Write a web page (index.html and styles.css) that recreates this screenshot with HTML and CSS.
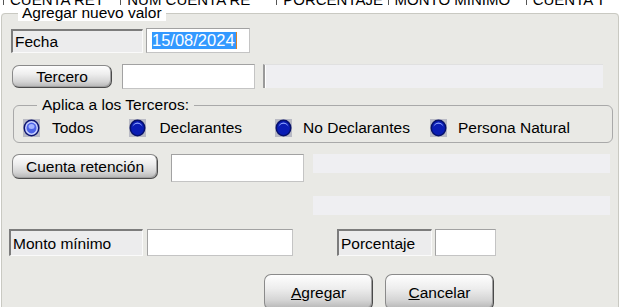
FILE: index.html
```html
<!DOCTYPE html>
<html lang="es">
<head>
    <meta charset="UTF-8">
    <title>Agregar nuevo valor</title>
    <link rel="stylesheet" href="styles.css">
</head>
<body>
    <div class="grid-head">
        <span class="col c1"><span>CUENTA RET</span></span>
        <span class="col c2"><span>NUM CUENTA RE</span></span>
        <span class="col c3"><span>PORCENTAJE</span></span>
        <span class="col c4"><span>MONTO MINIMO</span></span>
        <span class="col c5"><span>CUENTA T</span></span>
    </div>

    <fieldset class="group">
        <legend>Agregar nuevo valor</legend>

        <div class="row row-fecha">
            <span class="caption cap-fecha">Fecha</span>
            <div class="field date"><span class="sel">15/08/2024</span><span class="caret"></span></div>
        </div>

        <div class="row row-tercero">
            <button class="btn btn-tercero">Tercero</button>
            <div class="field in-tercero"></div>
            <div class="readonly ro-tercero"></div>
        </div>

        <fieldset class="aplica">
            <legend>Aplica a los Terceros:</legend>
            <div class="radios">
                <label class="radio r-todos">
                    <svg width="17" height="18" viewBox="0 0 17 18">
                        <rect x="0" y="0" width="17" height="18" fill="#b9bac4"/>
                        <ellipse cx="8.5" cy="9" rx="8" ry="8.5" fill="#0c1470"/>
                        <ellipse cx="8.5" cy="9" rx="6.5" ry="7" fill="#c8d0ff"/>
                        <ellipse cx="8.5" cy="9" rx="5" ry="5.4" fill="#4c62e6"/>
                        <ellipse cx="8.5" cy="7.6" rx="3" ry="2.5" fill="#a4b4ff"/>
                    </svg>
                    Todos
                </label>
                <label class="radio r-decl">
                    <svg width="17" height="18" viewBox="0 0 17 18">
                        <rect x="0" y="0" width="17" height="18" fill="#b9bac4"/>
                        <ellipse cx="8.5" cy="9" rx="8" ry="8.5" fill="#06106a"/>
                        <ellipse cx="8.5" cy="9" rx="6.5" ry="7" fill="#0a1cb4"/>
                        <path d="M3.5 8.6 A5 5.2 0 0 1 13.5 8.6 A5 3.8 0 0 0 3.5 8.6 Z" fill="#8ea4ff"/>
                    </svg>
                    Declarantes
                </label>
                <label class="radio r-nodecl">
                    <svg width="17" height="18" viewBox="0 0 17 18">
                        <rect x="0" y="0" width="17" height="18" fill="#b9bac4"/>
                        <ellipse cx="8.5" cy="9" rx="8" ry="8.5" fill="#06106a"/>
                        <ellipse cx="8.5" cy="9" rx="6.5" ry="7" fill="#0a1cb4"/>
                        <path d="M3.5 8.6 A5 5.2 0 0 1 13.5 8.6 A5 3.8 0 0 0 3.5 8.6 Z" fill="#8ea4ff"/>
                    </svg>
                    No Declarantes
                </label>
                <label class="radio r-persona">
                    <svg width="17" height="18" viewBox="0 0 17 18">
                        <rect x="0" y="0" width="17" height="18" fill="#b9bac4"/>
                        <ellipse cx="8.5" cy="9" rx="8" ry="8.5" fill="#06106a"/>
                        <ellipse cx="8.5" cy="9" rx="6.5" ry="7" fill="#0a1cb4"/>
                        <path d="M3.5 8.6 A5 5.2 0 0 1 13.5 8.6 A5 3.8 0 0 0 3.5 8.6 Z" fill="#8ea4ff"/>
                    </svg>
                    Persona Natural
                </label>
            </div>
        </fieldset>

        <div class="row row-cuenta">
            <button class="btn btn-cuenta">Cuenta retención</button>
            <div class="field in-cuenta"></div>
            <div class="readonly ro-cuenta"></div>
        </div>

        <div class="readonly ro-extra"></div>

        <div class="row row-monto">
            <span class="caption cap-monto">Monto mínimo</span>
            <div class="field in-monto"></div>
            <span class="caption cap-porc">Porcentaje</span>
            <div class="field in-porc"></div>
        </div>

        <div class="row row-actions">
            <button class="btn btn-big btn-agregar"><u>A</u>gregar</button>
            <button class="btn btn-big btn-cancelar"><u>C</u>ancelar</button>
        </div>
    </fieldset>
</body>
</html>
```

FILE: styles.css
```css
body {
    margin: 0;
    background: #fff;
    font-family: 'Liberation Sans', Arial, sans-serif;
    font-size: 15.5px;
    color: #000;
    overflow: hidden;
}

/* grid header, only its lower edge is visible */
.grid-head {
    display: flex;
    align-items: flex-start;
    height: 5px;
    overflow: hidden;
    font-size: 15px;
}
.grid-head .col {
    display: block;
    height: 5px;
    overflow: hidden;
    padding-left: 6px;
    border-left: 1px solid #555;
    white-space: nowrap;
    line-height: 10px;
}
.grid-head .col span {
    display: block;
    margin-top: -5px;
}
.c1 { margin-left: 3px; width: 111px; }
.c2 { width: 150px; }
.c3 { width: 105px; }
.c4 { width: 132px; }
.c5 { width: 90px; }

.group {
    margin: 0 0 0 1px;
    padding: 0;
    width: 618px;
    height: 330px;
    box-sizing: border-box;
    border: 1px solid #c9c9c2;
    border-radius: 4px;
    background: #e9e9e5;
    min-width: 0;
}
.group > legend {
    margin-left: 16px;
    padding: 0 4px;
    line-height: 16px;
    background: #fff;
}

.row {
    display: flex;
    align-items: flex-start;
}

.caption {
    box-sizing: border-box;
    height: 24px;
    padding-left: 2px;
    line-height: 22px;
    background: #ececed;
    border-top: 2px solid #7c7c7c;
    border-left: 2px solid #7c7c7c;
    border-right: 1px solid #fafafa;
    border-bottom: 1px solid #fafafa;
    white-space: nowrap;
}

.field {
    box-sizing: border-box;
    background: #fff;
    border: 1px solid #a2a2a2;
    border-right-color: #c4c4c4;
    border-bottom-color: #c4c4c4;
}

.readonly {
    box-sizing: border-box;
    background: #efeff2;
}

.btn {
    box-sizing: border-box;
    padding: 0;
    font-family: inherit;
    font-size: 15.5px;
    color: #000;
    border: 1px solid #8a8a8a;
    border-right-color: #4a4a4a;
    border-bottom-color: #4a4a4a;
    border-radius: 7px;
    background: linear-gradient(#fefefe, #ededed 40%, #d4d4d4 75%, #b4b4b4);
    box-shadow: inset -1px -1px 0 #a0a0a0;
}

/* fecha */
.row-fecha { margin: 8px 0 0 9px; }
.cap-fecha { width: 132px; }
.date {
    width: 104px;
    height: 25px;
    margin: -1px 0 0 3px;
    padding: 3px 0 0 5px;
    display: flex;
    font-size: 16.5px;
}
.date .sel {
    background: #3399ff;
    color: #fff;
    line-height: 17px;
    height: 17px;
    padding-right: 1px;
}
.date .caret {
    width: 1px;
    height: 17px;
    background: #d9822b;
}

/* tercero */
.row-tercero { margin: 11px 0 0 10px; }
.btn-tercero { width: 100px; height: 23px; margin-top: 1px; }
.in-tercero { width: 133px; height: 25px; margin-left: 10px; }
.ro-tercero {
    width: 340px;
    height: 24px;
    margin-left: 8px;
    border-left: 2px solid #9a9a9a;
    border-top: 1px solid #e0e0e0;
    box-shadow: inset 1px 0 0 #fff;
}

/* aplica */
.aplica {
    margin: 7px 0 0 11px;
    padding: 5px 0 5px 9px;
    width: 600px;
    box-sizing: border-box;
    border: 1px solid #a9a9a9;
    border-radius: 6px;
    min-width: 0;
}
.aplica > legend {
    margin-left: 14px;
    padding: 0 5px;
    line-height: 18px;
}
.radios {
    display: flex;
    height: 18px;
    align-items: center;
}
.radio {
    display: flex;
    align-items: center;
    gap: 12px;
    white-space: nowrap;
}
.r-decl { margin-left: 36px; gap: 13px; }
.r-nodecl { margin-left: 33px; gap: 11px; }
.r-persona { margin-left: 20px; gap: 11px; }

/* cuenta */
.row-cuenta { margin: 11px 0 0 10px; }
.btn-cuenta { width: 146px; height: 25px; }
.in-cuenta { width: 133px; height: 28px; margin-left: 13px; }
.ro-cuenta { width: 297px; height: 19px; margin-left: 9px; }
.ro-extra { width: 297px; height: 19px; margin: 14px 0 0 311px; }

/* monto */
.row-monto { margin: 14px 0 0 7px; }
.row-monto .caption { height: 27px; line-height: 25px; }
.cap-monto { width: 134px; }
.in-monto { width: 146px; height: 27px; margin-left: 4px; }
.cap-porc { width: 95px; margin-left: 44px; }
.in-porc { width: 61px; height: 27px; margin-left: 3px; }

/* actions */
.row-actions { margin: 18px 0 0 262px; gap: 12px; }
.btn-big { width: 109px; height: 36px; padding-top: 2px; }
```
